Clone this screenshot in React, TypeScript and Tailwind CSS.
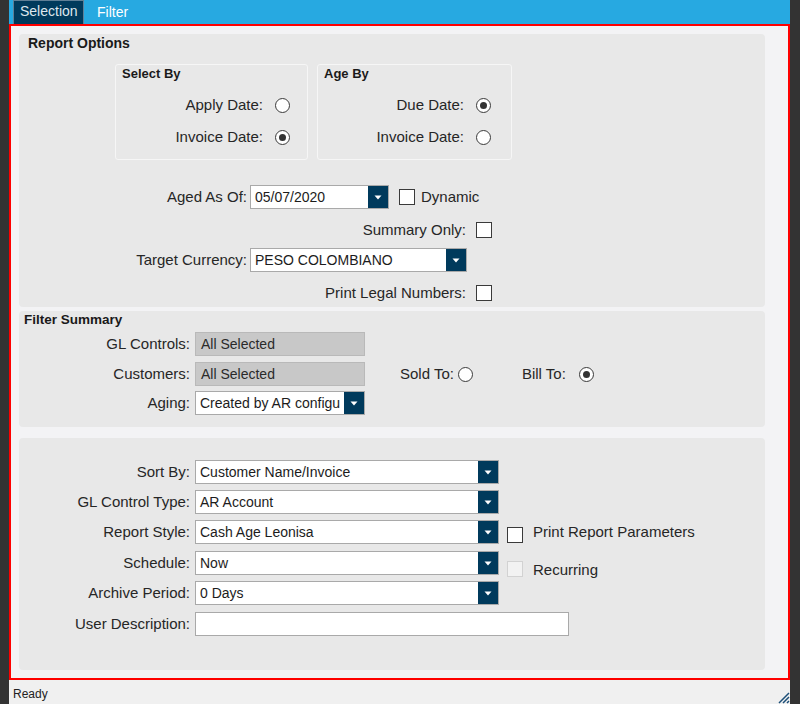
import React from "react";

const Caret = () => (
  <svg width="8" height="5" viewBox="0 0 8 5">
    <path d="M0.5 0.5 L7.5 0.5 L4 4.5 Z" fill="#ffffff" />
  </svg>
);

const Select = ({ value, w }: { value: string; w: string }) => (
  <div className={`${w} h-[24px] flex border border-[#a9a9a9] bg-white`}>
    <div className="flex-1 overflow-hidden whitespace-nowrap pl-[4px] text-[14px] leading-[22px] text-[#1c1c1c]">
      {value}
    </div>
    <div className="w-[20px] bg-[#003a5c] flex items-center justify-center">
      <Caret />
    </div>
  </div>
);

const Radio = ({ checked }: { checked?: boolean }) => (
  <div className="w-[15px] h-[15px] rounded-full border border-[#3a3a3a] bg-white flex items-center justify-center shrink-0">
    {checked && <div className="w-[7px] h-[7px] rounded-full bg-[#333]" />}
  </div>
);

const Checkbox = ({ disabled }: { disabled?: boolean }) => (
  <div
    className={`w-[16px] h-[16px] border shrink-0 ${
      disabled ? "border-[#d2d2d2] bg-[#f2f2f2]" : "border-[#3a3a3a] bg-white"
    }`}
  />
);

const ReadOnly = ({ value }: { value: string }) => (
  <div className="w-[170px] h-[24px] border border-[#b9b9b9] bg-[#c8c8c8] pl-[5px] text-[14px] leading-[22px] text-[#2a2a2a]">
    {value}
  </div>
);

const GroupBox = ({
  title,
  w,
  pr,
  rows,
}: {
  title: string;
  w: string;
  pr: string;
  rows: { label: string; checked?: boolean }[];
}) => (
  <div className={`${w} h-[96px] border border-[#f6f6f6] rounded-[3px]`}>
    <div className="h-[18px] pl-[6px] flex items-center font-bold text-[13px] text-[#1a1a1a]">
      {title}
    </div>
    <div className="mt-[6px]">
      {rows.map((r) => (
        <div key={r.label} className={`h-[32px] flex items-center justify-end gap-[12px] ${pr}`}>
          <span>{r.label}</span>
          <Radio checked={r.checked} />
        </div>
      ))}
    </div>
  </div>
);

export default function App() {
  return (
    <div className="w-[800px] h-[704px] bg-[#333333] flex overflow-hidden font-[family-name:'Liberation_Sans',Arial,sans-serif] text-[15px] text-[#262626]">
      <div className="ml-[9px] w-[781px] flex flex-col">
        {/* tabs */}
        <div className="h-[24px] bg-[#27a9e1] flex items-stretch">
          <div className="ml-[4px] w-[71px] border border-b-0 border-[#5f7f96] bg-[#003a5c] pl-[6px] text-[14px] leading-[20px] text-[#dfe7ee]">
            Selection
          </div>
          <div className="ml-[13px] text-[14px] leading-[24px] text-white">Filter</div>
        </div>

        {/* content */}
        <div className="h-[656px] border-2 border-[#ff0000] bg-[#f3f3f5] pt-[8px] pl-[8px]">
          {/* Report Options */}
          <div className="w-[746px] h-[273px] rounded-[4px] bg-[#e8e8e8]">
            <div className="h-[18px] pl-[9px] flex items-center font-bold text-[14px] text-[#1a1a1a]">
              Report Options
            </div>
            <div className="mt-[12px] ml-[96px] flex gap-[9px]">
              <GroupBox
                title="Select By"
                w="w-[193px]"
                pr="pr-[17px]"
                rows={[{ label: "Apply Date:" }, { label: "Invoice Date:", checked: true }]}
              />
              <GroupBox
                title="Age By"
                w="w-[195px]"
                pr="pr-[20px]"
                rows={[{ label: "Due Date:", checked: true }, { label: "Invoice Date:" }]}
              />
            </div>
            <div className="mt-[25px] h-[24px] flex items-center">
              <span className="w-[228px] text-right">Aged As Of:</span>
              <div className="ml-[3px]">
                <Select value="05/07/2020" w="w-[139px]" />
              </div>
              <div className="ml-[10px]">
                <Checkbox />
              </div>
              <span className="ml-[6px]">Dynamic</span>
            </div>
            <div className="mt-[9px] h-[24px] flex items-center">
              <span className="w-[447px] text-right">Summary Only:</span>
              <div className="ml-[10px]">
                <Checkbox />
              </div>
            </div>
            <div className="mt-[6px] h-[24px] flex items-center">
              <span className="w-[228px] text-right">Target Currency:</span>
              <div className="ml-[3px]">
                <Select value="PESO COLOMBIANO" w="w-[217px]" />
              </div>
            </div>
            <div className="mt-[9px] h-[24px] flex items-center">
              <span className="w-[447px] text-right">Print Legal Numbers:</span>
              <div className="ml-[10px]">
                <Checkbox />
              </div>
            </div>
          </div>

          {/* Filter Summary */}
          <div className="mt-[4px] w-[746px] h-[116px] rounded-[4px] bg-[#e8e8e8]">
            <div className="h-[18px] pl-[5px] flex items-center font-bold text-[13.5px] text-[#1a1a1a]">
              Filter Summary
            </div>
            <div className="mt-[3px] h-[24px] flex items-center">
              <span className="w-[171px] text-right">GL Controls:</span>
              <div className="ml-[5px]">
                <ReadOnly value="All Selected" />
              </div>
            </div>
            <div className="mt-[6px] h-[24px] flex items-center">
              <span className="w-[171px] text-right">Customers:</span>
              <div className="ml-[5px]">
                <ReadOnly value="All Selected" />
              </div>
              <span className="ml-[35px]">Sold To:</span>
              <div className="ml-[4px]">
                <Radio />
              </div>
              <span className="ml-[49px]">Bill To:</span>
              <div className="ml-[13px]">
                <Radio checked />
              </div>
            </div>
            <div className="mt-[5px] h-[24px] flex items-center">
              <span className="w-[171px] text-right">Aging:</span>
              <div className="ml-[5px]">
                <Select value="Created by AR configu" w="w-[170px]" />
              </div>
            </div>
          </div>

          {/* Output options */}
          <div className="mt-[11px] w-[746px] h-[232px] rounded-[4px] bg-[#e8e8e8] pt-[22px]">
            <div className="h-[24px] flex items-center">
              <span className="w-[171px] text-right">Sort By:</span>
              <div className="ml-[5px]">
                <Select value="Customer Name/Invoice" w="w-[304px]" />
              </div>
            </div>
            <div className="mt-[6px] h-[24px] flex items-center">
              <span className="w-[171px] text-right">GL Control Type:</span>
              <div className="ml-[5px]">
                <Select value="AR Account" w="w-[304px]" />
              </div>
            </div>
            <div className="mt-[6px] h-[24px] flex items-center">
              <span className="w-[171px] text-right">Report Style:</span>
              <div className="ml-[5px]">
                <Select value="Cash Age Leonisa" w="w-[304px]" />
              </div>
              <div className="ml-[8px] self-start mt-[3px] flex items-start">
                <div className="mt-[4px]">
                  <Checkbox />
                </div>
                <span className="ml-[10px] leading-[18px]">Print Report Parameters</span>
              </div>
            </div>
            <div className="mt-[7px] h-[24px] flex items-center">
              <span className="w-[171px] text-right">Schedule:</span>
              <div className="ml-[5px]">
                <Select value="Now" w="w-[304px]" />
              </div>
              <div className="ml-[8px] self-start mt-[10px] flex items-start">
                <Checkbox disabled />
                <span className="ml-[10px] leading-[18px]">Recurring</span>
              </div>
            </div>
            <div className="mt-[6px] h-[24px] flex items-center">
              <span className="w-[171px] text-right">Archive Period:</span>
              <div className="ml-[5px]">
                <Select value="0 Days" w="w-[304px]" />
              </div>
            </div>
            <div className="mt-[7px] h-[24px] flex items-center">
              <span className="w-[171px] text-right">User Description:</span>
              <div className="ml-[5px] w-[374px] h-[24px] border border-[#a9a9a9] bg-white" />
            </div>
          </div>
        </div>

        {/* status bar */}
        <div className="relative h-[24px] bg-[#f0f0f0] pl-[4px] pt-[5px] text-[12px] leading-[18px] text-[#222]">
          Ready
          <svg
            className="absolute right-0 bottom-0"
            width="14"
            height="14"
            viewBox="0 0 14 14"
          >
            <path d="M13 3 L3 13 M13 7 L7 13 M13 11 L11 13" stroke="#1d4f78" strokeWidth="1.5" />
          </svg>
        </div>
      </div>
    </div>
  );
}
